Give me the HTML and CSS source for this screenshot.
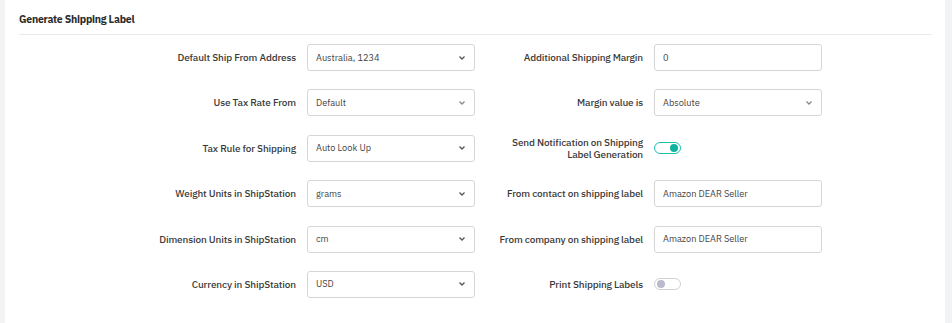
FILE: index.html
```html
<!DOCTYPE html>
<html>
<head>
<meta charset="utf-8">
<link rel="stylesheet" href="styles.css">
</head>
<body>
<div class="page">
  <div class="panel">
    <div class="header">Generate Shipping Label</div>
    <div class="form">
      <div class="label">Default Ship From Address</div>
      <div class="field select"><span>Australia, 1234</span><svg class="chev" viewBox="0 0 6 4"><path d="M0.5 0.5 L3 3 L5.5 0.5" /></svg></div>
      <div class="label">Additional Shipping Margin</div>
      <div class="field"><span>0</span></div>

      <div class="label">Use Tax Rate From</div>
      <div class="field select"><span>Default</span><svg class="chev light" viewBox="0 0 6 4"><path d="M0.5 0.5 L3 3 L5.5 0.5" /></svg></div>
      <div class="label">Margin value is</div>
      <div class="field select"><span>Absolute</span><svg class="chev light" viewBox="0 0 6 4"><path d="M0.5 0.5 L3 3 L5.5 0.5" /></svg></div>

      <div class="label">Tax Rule for Shipping</div>
      <div class="field select"><span>Auto Look Up</span><svg class="chev" viewBox="0 0 6 4"><path d="M0.5 0.5 L3 3 L5.5 0.5" /></svg></div>
      <div class="label two">Send Notification on Shipping<br>Label Generation</div>
      <div class="toggle-cell"><span class="toggle on"><span class="knob"></span></span></div>

      <div class="label">Weight Units in ShipStation</div>
      <div class="field select"><span>grams</span><svg class="chev" viewBox="0 0 6 4"><path d="M0.5 0.5 L3 3 L5.5 0.5" /></svg></div>
      <div class="label">From contact on shipping label</div>
      <div class="field"><span>Amazon DEAR Seller</span></div>

      <div class="label">Dimension Units in ShipStation</div>
      <div class="field select"><span>cm</span><svg class="chev" viewBox="0 0 6 4"><path d="M0.5 0.5 L3 3 L5.5 0.5" /></svg></div>
      <div class="label">From company on shipping label</div>
      <div class="field"><span>Amazon DEAR Seller</span></div>

      <div class="label">Currency in ShipStation</div>
      <div class="field select"><span>USD</span><svg class="chev" viewBox="0 0 6 4"><path d="M0.5 0.5 L3 3 L5.5 0.5" /></svg></div>
      <div class="label">Print Shipping Labels</div>
      <div class="toggle-cell"><span class="toggle"><span class="knob"></span></span></div>
    </div>
  </div>
</div>
</body>
</html>
```
FILE: styles.css
```css
html, body {
  margin: 0;
  padding: 0;
  height: 100%;
  background: #f2f3f5;
  font-family: "IBM Plex Sans", Roboto, "Liberation Sans", sans-serif;
  color: #333;
}
.page {
  height: 100%;
  padding: 0 7px 0 5px;
  box-sizing: border-box;
}
.panel {
  background: #fff;
  height: 100%;
  padding: 0 13px 0 14px;
  box-sizing: border-box;
}
.header {
  height: 35px;
  display: flex;
  align-items: center;
  padding-top: 4px;
  box-sizing: border-box;
  font-size: 10.5px;
  letter-spacing: -0.25px;
  font-weight: 700;
  color: #2b2b2b;
  border-bottom: 1px solid #ebebeb;
}
.form {
  display: grid;
  grid-template-columns: 277px 168px 157px 168px;
  grid-auto-rows: 27px;
  column-gap: 11px;
  row-gap: 18.4px;
  padding-top: 9px;
}
.label {
  display: flex;
  align-items: center;
  justify-content: flex-end;
  text-align: right;
  font-size: 10px;
  letter-spacing: -0.15px;
  font-weight: 500;
  color: #3a3a3a;
  white-space: nowrap;
}
.label.two {
  line-height: 11.5px;
  padding-top: 1px;
}
.field {
  border: 1px solid #d6d6d6;
  border-radius: 3px;
  display: flex;
  align-items: center;
  justify-content: space-between;
  padding: 0 9px 0 8px;
  font-size: 9.2px;
  color: #444;
  box-sizing: border-box;
}
.chev {
  width: 6px;
  height: 4px;
  fill: none;
  stroke: #555;
  stroke-width: 1.3;
}
.chev.light {
  stroke: #888;
}
.toggle-cell {
  display: flex;
  align-items: center;
}
.toggle {
  width: 27px;
  height: 12px;
  border-radius: 7px;
  border: 1px solid #d0d1d6;
  box-sizing: border-box;
  display: flex;
  align-items: center;
  padding: 0 2px;
  background: #fff;
}
.toggle .knob {
  width: 8px;
  height: 8px;
  border-radius: 50%;
  background: #b9bbcc;
}
.toggle.on {
  border-color: #1bbfae;
  justify-content: flex-end;
}
.toggle.on .knob {
  background: #10b3a0;
}
```
